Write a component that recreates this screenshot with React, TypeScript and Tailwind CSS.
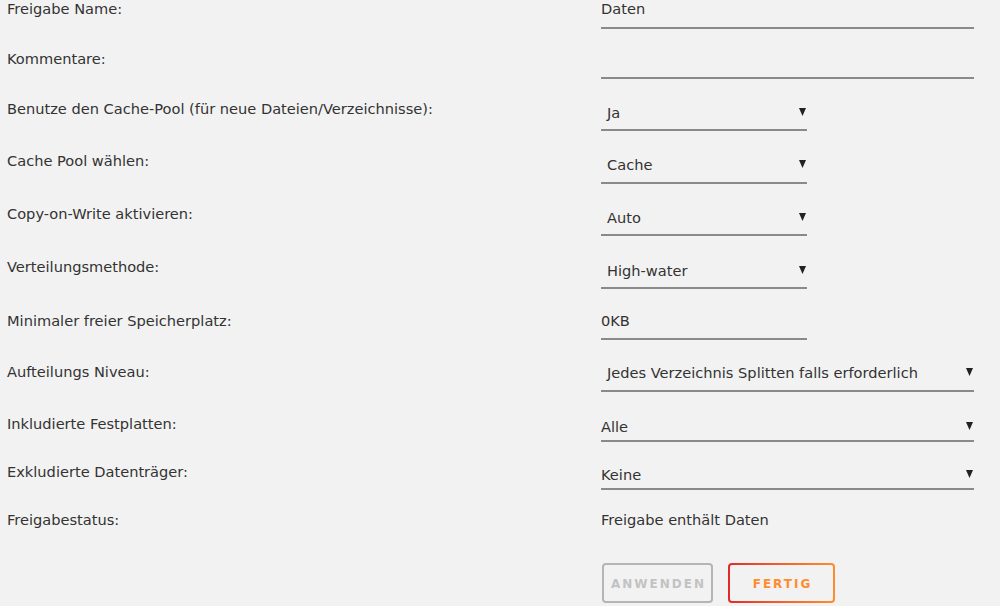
import React from 'react';

type Row = {
  label: string;
  kind: 'text' | 'select' | 'static';
  value: string;
  rowClass: string;
  ctrlClass: string;
};

const rows: Row[] = [
  { label: 'Freigabe Name:', kind: 'text', value: 'Daten', rowClass: 'h-[50px]', ctrlClass: 'w-[373px] pb-[9px]' },
  { label: 'Kommentare:', kind: 'text', value: '', rowClass: 'h-[50px]', ctrlClass: 'w-[373px] pb-[9px]' },
  { label: 'Benutze den Cache-Pool (für neue Dateien/Verzeichnisse):', kind: 'select', value: 'Ja', rowClass: 'h-[52px]', ctrlClass: 'w-[206px] pl-[6px] pt-[4px] pb-[7px]' },
  { label: 'Cache Pool wählen:', kind: 'select', value: 'Cache', rowClass: 'h-[53px]', ctrlClass: 'w-[206px] pl-[6px] pt-[4px] pb-[8px]' },
  { label: 'Copy-on-Write aktivieren:', kind: 'select', value: 'Auto', rowClass: 'h-[53px]', ctrlClass: 'w-[206px] pl-[6px] pt-[4px] pb-[7px]' },
  { label: 'Verteilungsmethode:', kind: 'select', value: 'High-water', rowClass: 'h-[54px]', ctrlClass: 'w-[206px] pl-[6px] pt-[4px] pb-[7px]' },
  { label: 'Minimaler freier Speicherplatz:', kind: 'text', value: '0KB', rowClass: 'h-[51px]', ctrlClass: 'w-[206px] pb-[8px]' },
  { label: 'Aufteilungs Niveau:', kind: 'select', value: 'Jedes Verzeichnis Splitten falls erforderlich', rowClass: 'h-[52px]', ctrlClass: 'w-[373px] pl-[6px] pt-[1px] pb-[8px]' },
  { label: 'Inkludierte Festplatten:', kind: 'select', value: 'Alle', rowClass: 'h-[48px]', ctrlClass: 'w-[373px] pt-[3px] pb-[4px]' },
  { label: 'Exkludierte Datenträger:', kind: 'select', value: 'Keine', rowClass: 'h-[48px]', ctrlClass: 'w-[373px] pt-[3px] pb-[4px]' },
  { label: 'Freigabestatus:', kind: 'static', value: 'Freigabe enthält Daten', rowClass: 'h-[52px]', ctrlClass: 'w-[373px]' },
];

function Caret() {
  return (
    <svg width="7" height="8" viewBox="0 0 7 8" className="absolute right-[1px] top-[4px]">
      <polygon points="0,0 7,0 3.5,8" fill="#222" />
    </svg>
  );
}

export default function App() {
  return (
    <div
      className="w-[1000px] h-[606px] overflow-hidden bg-[#f2f2f2] text-[#333] text-[14.6px] leading-[18px] pl-[7px]"
      style={{ fontFamily: '"DejaVu Sans", sans-serif' }}
    >
      {rows.map((row) => (
        <div key={row.label} className={`flex items-start ${row.rowClass}`}>
          <div className="w-[594px] shrink-0">{row.label}</div>
          {row.kind === 'static' ? (
            <div className={row.ctrlClass}>{row.value}</div>
          ) : (
            <div className={`relative border-b-2 border-[#8a8a8a] ${row.ctrlClass}`}>
              <div className="relative h-[18px] whitespace-nowrap">
                {row.value}
                {row.kind === 'select' && <Caret />}
              </div>
            </div>
          )}
        </div>
      ))}

      {/* Buttons */}
      <div className="flex gap-[15px] pl-[595px]">
        <button className="h-[40px] w-[111px] rounded-[4px] border-2 border-[#b5b5b5] text-[12px] leading-[14px] pt-[2px] font-bold tracking-[2px] text-[#c2c2c2] pl-[2px]">
          ANWENDEN
        </button>
        <div className="rounded-[4px] p-[2px] bg-gradient-to-r from-[#e22828] to-[#ff8c2f]">
          <button className="h-[36px] w-[103px] rounded-[2px] bg-[#f2f2f2] text-[12px] leading-[14px] pt-[2px] font-bold tracking-[2px] text-[#ff8c2f] pl-[2px]">
            FERTIG
          </button>
        </div>
      </div>
    </div>
  );
}
